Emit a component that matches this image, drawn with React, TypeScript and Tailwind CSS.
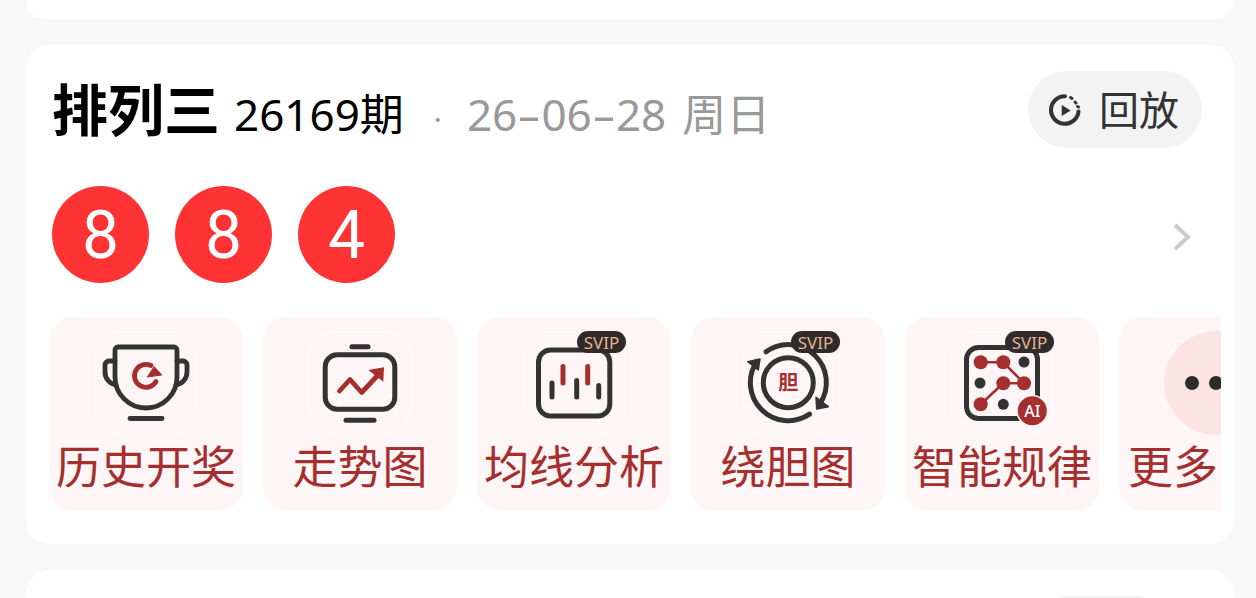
const cjk = 'font-["Noto_Sans","Noto_Sans_CJK_SC",sans-serif]';

function Badge() {
  return (
    <span className='absolute right-0 top-0 flex h-[22px] w-[49px] items-center justify-center rounded-full bg-[#2f2b2a] font-["Noto_Sans",sans-serif] text-[17px] leading-none text-[#e3b393]'>
      SVIP
    </span>
  );
}

function Corners() {
  return <rect x="1" y="1" width="102" height="102" rx="26" fill="none" stroke="#ffffff" strokeOpacity="0.5" strokeWidth="1" />;
}

function TrophyIcon() {
  return (
    <svg viewBox="0 0 104 104" className="h-full w-full">
      <Corners />
      <g fill="none" stroke="#333333" strokeWidth="4.8" strokeLinecap="round" strokeLinejoin="round">
        <path d="M24 16H80a3 3 0 0 1 3 3V46a31 31 0 0 1-62 0V19a3 3 0 0 1 3-3z" />
        <path d="M21 30H15a4 4 0 0 0-4 4V41a13 13 0 0 0 11 13" />
        <path d="M83 30H89a4 4 0 0 1 4 4V41a13 13 0 0 1-11 13" />
        <path d="M36 87.5H68" />
      </g>
      <path d="M62 50.5a11.5 11.5 0 1 1-5-16" fill="none" stroke="#a52f2f" strokeWidth="4.8" strokeLinecap="round" />
      <path d="M60 36L67.5 44L53.5 46z" fill="#a52f2f" stroke="#a52f2f" strokeWidth="1.2" strokeLinejoin="round" />
    </svg>
  );
}

function MonitorIcon() {
  return (
    <svg viewBox="0 0 104 104" className="h-full w-full">
      <Corners />
      <g fill="none" stroke="#333333" strokeWidth="5" strokeLinecap="round">
        <rect x="17.2" y="23.8" width="69.6" height="54.4" rx="12" />
        <path d="M44 15.7H60" />
        <path d="M38 89.3H66" />
      </g>
      <path d="M31.5 60L42 48.5L53.7 61.5L70 44" fill="none" stroke="#a52f2f" strokeWidth="4.8" strokeLinecap="round" strokeLinejoin="round" />
      <path d="M60.3 39L76 36.3L75.3 50.7z" fill="#a52f2f" />
    </svg>
  );
}

function CandleIcon() {
  return (
    <svg viewBox="0 0 104 104" className="h-full w-full">
      <Corners />
      <rect x="16.5" y="19" width="71.3" height="66" rx="12" fill="none" stroke="#333333" strokeWidth="5" />
      <g fill="none" strokeWidth="5" strokeLinecap="round">
        <path d="M30 52V66M54.7 49.5V66M76.7 54.5V66" stroke="#333333" />
        <path d="M41 35.5V52M65.7 35.5V52" stroke="#a52f2f" />
      </g>
    </svg>
  );
}

function CycleIcon() {
  return (
    <svg viewBox="0 0 104 104" className="h-full w-full">
      <Corners />
      <g fill="none" stroke="#333333" strokeWidth="5" strokeLinecap="round">
        <circle cx="52.3" cy="51.7" r="25" />
        <path d="M30.1 20.8A38 38 0 0 1 83.9 72.8" />
        <path d="M73.5 83.2A38 38 0 0 1 20.9 30.3" />
      </g>
      <path d="M80 66.3L92.3 75.7L80.7 78z" fill="#333333" stroke="#333333" strokeWidth="1.5" strokeLinejoin="round" />
      <path d="M11.7 30.7L24 28L22.3 39z" fill="#333333" stroke="#333333" strokeWidth="1.5" strokeLinejoin="round" />
      <text x="52.3" y="59" textAnchor="middle" fontSize="20" fontWeight="700" fill="#a52f2f" fontFamily="Noto Sans CJK SC, sans-serif">胆</text>
    </svg>
  );
}

function GridIcon() {
  return (
    <svg viewBox="0 0 104 104" className="h-full w-full">
      <Corners />
      <rect x="16.5" y="16.5" width="71" height="71" rx="12" fill="none" stroke="#333333" strokeWidth="5" />
      <g fill="none" stroke="#a52f2f" strokeWidth="2.6">
        <path d="M30.7 31.3H53.3L74 52.3H53.3L30.7 73.3" strokeLinejoin="round" />
      </g>
      <g fill="#a52f2f">
        <circle cx="30.7" cy="31.3" r="7" />
        <circle cx="53.3" cy="31.3" r="7" />
        <circle cx="53.3" cy="52.3" r="7" />
        <circle cx="74" cy="52.3" r="7" />
        <circle cx="30.7" cy="73.3" r="7" />
      </g>
      <g fill="#333333">
        <circle cx="74" cy="31" r="5.5" />
        <circle cx="30" cy="52" r="5.5" />
        <circle cx="53.3" cy="73.3" r="5.5" />
      </g>
      <circle cx="82.3" cy="79.7" r="16" fill="#fef6f6" />
      <circle cx="82.3" cy="79.7" r="14.5" fill="#a52f2f" />
      <text x="82.3" y="85.5" textAnchor="middle" fontSize="16" fontWeight="500" fill="#ffffff" fontFamily="Noto Sans, sans-serif">AI</text>
    </svg>
  );
}

function MoreIcon() {
  return (
    <div className="flex h-full w-full items-center gap-[10px] rounded-full bg-[#fde4e4] pl-[21px]">
      <span className="h-[14px] w-[14px] shrink-0 rounded-full bg-[#2f2b2a]" />
      <span className="h-[14px] w-[14px] shrink-0 rounded-full bg-[#2f2b2a]" />
      <span className="h-[14px] w-[14px] shrink-0 rounded-full bg-[#2f2b2a]" />
    </div>
  );
}

const tools = [
  { label: '历史开奖', icon: <TrophyIcon /> },
  { label: '走势图', icon: <MonitorIcon /> },
  { label: '均线分析', icon: <CandleIcon />, svip: true },
  { label: '绕胆图', icon: <CycleIcon />, svip: true },
  { label: '智能规律', icon: <GridIcon />, svip: true },
];

function Tile({ label, icon, svip }: { label: string; icon: React.ReactNode; svip?: boolean }) {
  return (
    <div className="flex h-[194px] w-[194px] shrink-0 flex-col items-center overflow-hidden rounded-[24px] bg-[#fef6f6] pt-[14px]">
      <div className="relative h-[104px] w-[104px] shrink-0">
        {icon}
        {svip && <Badge />}
      </div>
      <div className="mt-[2px] whitespace-nowrap text-[45px] leading-[60px] text-[#a52f2f]">{label}</div>
    </div>
  );
}

function Dash() {
  return <span className="mx-[5px] inline-block scale-x-[1.7]">-</span>;
}

export default function App() {
  return (
    <div className={`flex h-[598px] w-[1256px] flex-col gap-[26px] overflow-hidden bg-[#f8f8f8] pl-[26px] pr-[22px] ${cjk}`}>
      <div className="h-[19px] shrink-0 rounded-b-[24px] bg-white" />

      <div className="flex h-[499px] shrink-0 flex-col rounded-[24px] bg-white pl-[26px] pr-[32px]">
        {/* header */}
        <div className="flex h-[141px] shrink-0 items-start justify-between pt-[26px]">
          <div className="flex items-baseline whitespace-nowrap">
            <span className="text-[56px] font-bold leading-[76px] text-black">排列三</span>
            <span className="ml-[14px] text-[44px] leading-[76px] text-black">26169期</span>
            <span className="ml-[30px] text-[30px] leading-[76px] text-[#999999]">·</span>
            <span className="ml-[25px] text-[44px] leading-[76px] text-[#999999]">
              26<Dash />06<Dash />28<span className="ml-[16px]">周日</span>
            </span>
          </div>
          <div className="flex h-[77px] w-[174px] items-center gap-[18px] rounded-full bg-[#f3f3f3] pl-[21px]">
            <svg viewBox="0 0 32 32" className="h-[32px] w-[32px] shrink-0">
              <path d="M29.5 17.5A13.8 13.8 0 1 1 16 2.2" fill="none" stroke="#333333" strokeWidth="4" strokeLinecap="round" />
              <path d="M21.5 3.5L23 4.5M26 8L27 9M28.5 12.5L29.5 13" fill="none" stroke="#333333" strokeWidth="3" strokeLinecap="round" />
              <path d="M12.7 11L21.7 16.5L12.7 22z" fill="#333333" />
            </svg>
            <span className="whitespace-nowrap text-[40px] leading-none text-[#333333]">回放</span>
          </div>
        </div>

        {/* balls */}
        <div className="flex h-[97px] shrink-0 items-center justify-between">
          <div className="flex gap-[26px]">
            {['8', '8', '4'].map((n, i) => (
              <div
                key={i}
                className='flex h-[97px] w-[97px] items-center justify-center rounded-full bg-[#ff3333] pt-[3px] font-["Roboto",sans-serif] text-[66px] font-[450] leading-none text-white'
              >
                {n}
              </div>
            ))}
          </div>
          <svg viewBox="0 0 20 28" className="mr-[10px] mt-[5px] h-[28px] w-[20px]">
            <path d="M3 2L16 14L3 26" fill="none" stroke="#cccccc" strokeWidth="4" />
          </svg>
        </div>

        {/* tools */}
        <div className="ml-[-3px] mr-[-19px] mt-[34px] flex gap-[20px] overflow-hidden">
          {tools.map((t) => (
            <Tile key={t.label} label={t.label} icon={t.icon} svip={t.svip} />
          ))}
          <div className="flex h-[194px] w-[194px] shrink-0 flex-col overflow-hidden rounded-[24px] bg-[#fef6f6] pt-[14px]">
            <div className="ml-[45px] h-[104px] w-[104px] shrink-0">
              <MoreIcon />
            </div>
            <div className="mt-[2px] whitespace-nowrap pl-[9px] text-[45px] leading-[60px] text-[#a52f2f]">更多...</div>
          </div>
        </div>
      </div>

      <div className="flex min-h-0 flex-1 justify-end rounded-t-[24px] bg-white pr-[84px] pt-[26px]">
        <div className="h-[40px] w-[96px] rounded-[12px] bg-[#f3f3f3]" />
      </div>
    </div>
  );
}
